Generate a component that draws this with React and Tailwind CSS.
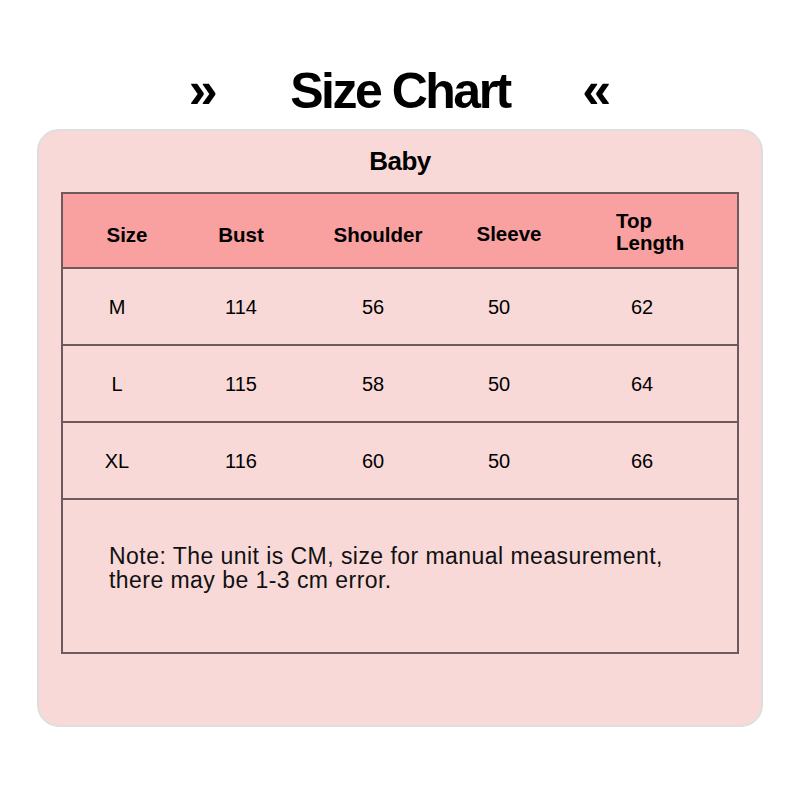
export default function App() {
  const rows = [
    { size: "M", bust: "114", shoulder: "56", sleeve: "50", length: "62" },
    { size: "L", bust: "115", shoulder: "58", sleeve: "50", length: "64" },
    { size: "XL", bust: "116", shoulder: "60", sleeve: "50", length: "66" },
  ];

  return (
    <div
      className="w-[800px] h-[800px] bg-white text-black overflow-hidden"
      style={{ fontFamily: '"Liberation Sans", Arial, sans-serif' }}
    >
      {/* Title */}
      <div className="pt-[66px] h-[116px] flex items-start justify-center">
        <span className="w-[40px] -mt-[1px] text-[52px] leading-[50px] font-bold text-center">»</span>
        <h1 className="mx-[67px] text-[50px] leading-[50px] font-bold tracking-[-2.5px]">
          Size Chart
        </h1>
        <span className="w-[40px] -mt-[1px] text-[52px] leading-[50px] font-bold text-center">«</span>
      </div>

      {/* Card */}
      <div className="mt-[13px] mx-auto w-[726px] h-[598px] rounded-[22px] border-2 border-[#dedede] bg-[#f8d9d8] pt-[17px] px-[22px]">
        <h2 className="text-center text-[26px] leading-[26px] font-bold tracking-[-0.5px]">Baby</h2>

        <div className="mt-[18px] w-[678px] border-2 border-[#6e5a5c]">
          {/* Header */}
          <div className="h-[75px] bg-[#f9a0a0] grid grid-cols-[128px_100px_174px_88px_1fr] items-center text-[20.5px] font-bold border-b-2 border-[#6e5a5c]">
            <div className="text-center pt-[10px]">Size</div>
            <div className="text-center pt-[10px]">Bust</div>
            <div className="text-center pt-[10px]">Shoulder</div>
            <div className="text-center pt-[8px]">Sleeve</div>
            <div className="pl-[63px] leading-[22px] pt-[2px]">
              Top
              <br />
              Length
            </div>
          </div>

          {/* Data rows */}
          {rows.map((r) => (
            <div
              key={r.size}
              className="h-[77px] grid grid-cols-[108px_140px_124px_128px_158px] items-center text-[20px] border-b-2 border-[#6e5a5c]"
            >
              <div className="text-center">{r.size}</div>
              <div className="text-center">{r.bust}</div>
              <div className="text-center">{r.shoulder}</div>
              <div className="text-center">{r.sleeve}</div>
              <div className="text-center">{r.length}</div>
            </div>
          ))}

          {/* Note */}
          <div className="h-[152px] pt-[44px] pl-[46px] text-[23px] leading-[24px] tracking-[0.45px] text-[#111]">
            Note: The unit is CM, size for manual measurement,
            <br />
            there may be 1-3 cm error.
          </div>
        </div>
      </div>
    </div>
  );
}
